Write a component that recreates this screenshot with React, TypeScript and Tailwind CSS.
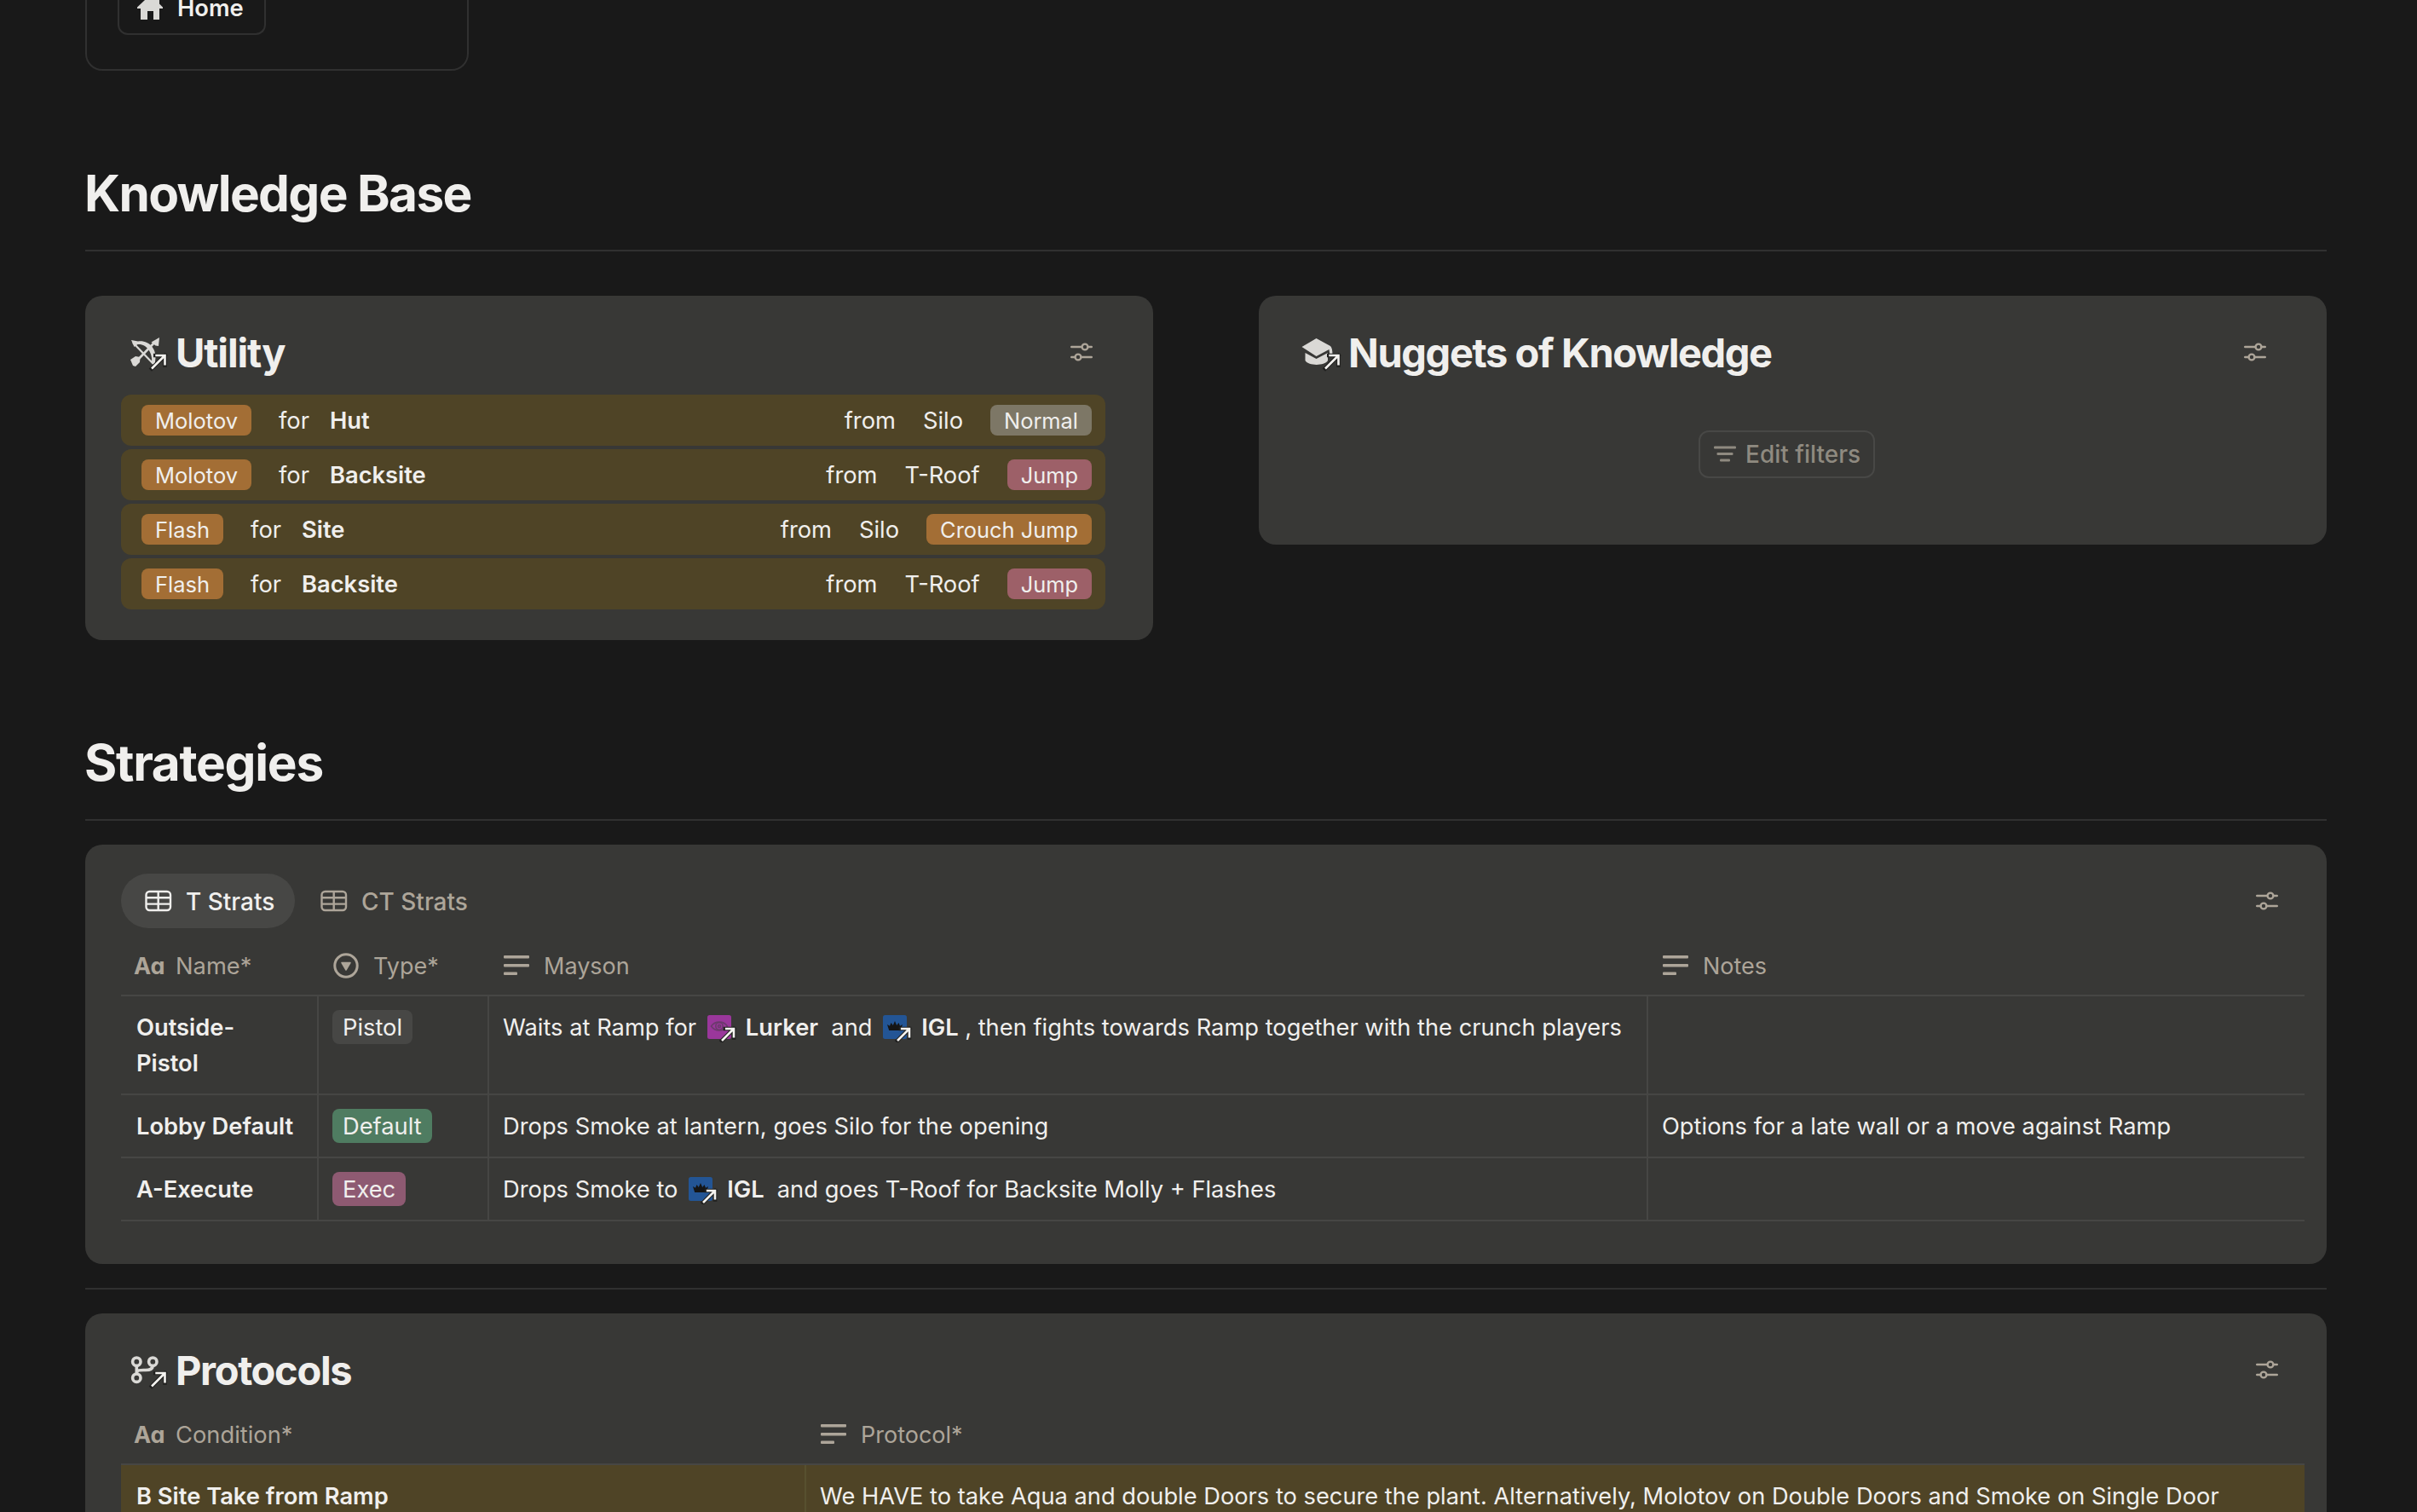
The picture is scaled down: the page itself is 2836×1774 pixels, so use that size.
import React from 'react';

interface UtilityRow {
  type: string;
  target: string;
  origin: string;
  throwType: string;
  throwColor: string;
}

interface StratRow {
  name: React.ReactNode;
  type: string;
  typeColor: string;
  mayson: React.ReactNode;
  notes: string;
  height: string;
}

// Small "linked page" arrow that sits on the corner of an icon
function LinkArrow({ x, y, size }: { x: number; y: number; size: number }) {
  const d = `M${x} ${y + size} L${x + size - 1} ${y + 1} M${x + size * 0.26} ${y + 1} H${x + size - 1} V${y + size * 0.76}`;
  return (
    <>
      <path d={d} stroke="#20201f" strokeWidth={4.6} fill="none" strokeLinecap="square" />
      <path d={d} stroke="#f4f3f0" strokeWidth={2.6} fill="none" />
    </>
  );
}

function BowIcon() {
  return (
    <svg className="overflow-visible" width="46" height="42" viewBox="0 0 46 42" fill="none">
      <path d="M1 7 L9 8.500 C22 7 30 17 29.500 28 L28.500 37 L25 34 C26.500 22 19 11 8.500 12 L4.500 15 Z" fill="#dad9d6" />
      <path d="M3 10 L27 35" stroke="#dad9d6" strokeWidth="2.200" />
      <path d="M6 33 L29 9" stroke="#dad9d6" strokeWidth="2.600" />
      <path d="M34 4 L33 14 L29.500 13.500 L24.500 9.500 Z" fill="#dad9d6" />
      <path d="M0 30 L6 26 L11.500 27 L11 33 L6 38 L3 37 Z" fill="#dad9d6" />
      <LinkArrow x={25} y={24} size={16.5} />
    </svg>
  );
}

function CapIcon() {
  return (
    <svg className="overflow-visible" width="46" height="42" viewBox="0 0 46 42" fill="none">
      <path d="M17.500 5 L34 14 Q36.500 16 36.500 25 H33.500 L32.500 18 L17.500 26 L0.500 15 Z" fill="#dad9d6" />
      <path d="M4.500 22 L17.500 29 L31 22 V31 C27 37.500 8.500 37.500 4.500 31 Z" fill="#dad9d6" />
      <LinkArrow x={28} y={24} size={16.5} />
    </svg>
  );
}

function BranchIcon() {
  return (
    <svg className="overflow-visible" width="46" height="42" viewBox="0 0 46 42" fill="none">
      <g stroke="#dad9d6" strokeWidth="3.6">
        <circle cx="7.300" cy="11.700" r="4.700" />
        <circle cx="26.300" cy="11.700" r="4.700" />
        <circle cx="7.300" cy="30.700" r="4.700" />
        <path d="M7.300 16.500 V26 M7.300 25 C8 21 11 21.500 18 21.500 C23 21.500 26 20 26.300 16.500" />
      </g>
      <LinkArrow x={25} y={24} size={16.5} />
    </svg>
  );
}

function SettingsIcon() {
  return (
    <svg width="26" height="24" viewBox="0 0 26 24" fill="none" stroke="#ada599" strokeWidth="2.4" strokeLinecap="round">
      <path d="M1.200 6 H13 M21 6 H24.800 M1.200 18 H5 M13 18 H24.800" />
      <circle cx="17" cy="6" r="3.400" />
      <circle cx="9" cy="18" r="3.400" />
    </svg>
  );
}

function TableIcon({ color }: { color: string }) {
  return (
    <svg width="32" height="26" viewBox="0 0 32 26" fill="none" stroke={color} strokeWidth="2.4">
      <rect x="1.500" y="2" width="28.500" height="22" rx="4" />
      <path d="M1.500 9.300 H30 M1.500 16.600 H30 M15.700 2 V24" />
    </svg>
  );
}

function LinesIcon() {
  return (
    <svg width="30" height="26" viewBox="0 0 30 26" fill="#ada599">
      <rect x="0" y="1" width="30" height="3.400" rx="1" />
      <rect x="0" y="11" width="30" height="3.400" rx="1" />
      <rect x="0" y="20.600" width="16" height="3.400" rx="1" />
    </svg>
  );
}

function SelectIcon() {
  return (
    <svg width="30" height="30" viewBox="0 0 30 30" fill="none">
      <circle cx="15" cy="15" r="13.200" stroke="#ada599" strokeWidth="3" />
      <path d="M10 11.500 H20 L15 20 Z" fill="#ada599" stroke="#ada599" strokeWidth="1.500" strokeLinejoin="round" />
    </svg>
  );
}

function Mention({ kind }: { kind: 'Lurker' | 'IGL' }) {
  return (
    <span className="ml-[5px] mr-[7.5px]">
      <svg className="inline-block align-[-8px]" width="36" height="32" viewBox="0 0 36 32" fill="none">
        <rect width="28" height="28" rx="2.500" fill={kind === 'Lurker' ? '#9a379b' : '#235595'} />
        {kind === 'Lurker' ? (
          <g stroke="#6c3a6d" strokeWidth="1.600">
            <path d="M4.500 13 C9 6.500 19 6.500 23.500 13 C19 19.500 9 19.500 4.500 13 Z" />
            <circle cx="14" cy="13" r="4.200" />
            <circle cx="14" cy="13" r="1.500" />
          </g>
        ) : (
          <path d="M5 11 L8 12.800 L9.500 9 L11.800 12 L14 7 L16.200 12 L18.500 9 L20 12.800 L23 11 L20.800 18 H7.200 Z" fill="#151515" />
        )}
        <LinkArrow x={17} y={15} size={15} />
      </svg>
      <span className="ml-[9px] font-semibold">{kind}</span>
    </span>
  );
}

const utility: UtilityRow[] = [
  { type: 'Molotov', target: 'Hut', origin: 'Silo', throwType: 'Normal', throwColor: 'bg-[#7d7766]' },
  { type: 'Molotov', target: 'Backsite', origin: 'T-Roof', throwType: 'Jump', throwColor: 'bg-[#9d6068]' },
  { type: 'Flash', target: 'Site', origin: 'Silo', throwType: 'Crouch Jump', throwColor: 'bg-[#a36e35]' },
  { type: 'Flash', target: 'Backsite', origin: 'T-Roof', throwType: 'Jump', throwColor: 'bg-[#9d6068]' },
];

const strats: StratRow[] = [
  {
    name: (
      <>
        Outside-
        <br />
        Pistol
      </>
    ),
    type: 'Pistol',
    typeColor: 'bg-[#474745]',
    mayson: (
      <>
        Waits at Ramp for <Mention kind="Lurker" /> and <Mention kind="IGL" />, then fights towards Ramp together with the crunch players
      </>
    ),
    notes: '',
    height: 'h-[116px]',
  },
  {
    name: 'Lobby Default',
    type: 'Default',
    typeColor: 'bg-[#4f7c61]',
    mayson: 'Drops Smoke at lantern, goes Silo for the opening',
    notes: 'Options for a late wall or a move against Ramp',
    height: 'h-[74px]',
  },
  {
    name: 'A-Execute',
    type: 'Exec',
    typeColor: 'bg-[#8e5a72]',
    mayson: (
      <>
        Drops Smoke to <Mention kind="IGL" /> and goes T-Roof for Backsite Molly + Flashes
      </>
    ),
    notes: '',
    height: 'h-[74px]',
  },
];

function UtilityItem({ row }: { row: UtilityRow }) {
  return (
    <div className="flex h-[60px] items-center rounded-[12px] bg-[#4f4426] pl-6 pr-4">
      <span className="flex h-9 items-center rounded-[8px] bg-[#a36e35] px-4 pt-0.5 text-[25.5px]">{row.type}</span>
      <span className="ml-8 pt-0.5">for</span>
      <span className="ml-6 pt-0.5 font-semibold">{row.target}</span>
      <span className="ml-auto pt-0.5">from</span>
      <span className="ml-8 pt-0.5">{row.origin}</span>
      <span className={`ml-8 flex h-9 items-center rounded-[8px] px-4 pt-0.5 text-[25.4px] ${row.throwColor}`}>{row.throwType}</span>
    </div>
  );
}

function Divider({ className }: { className: string }) {
  return <div className={`h-[2px] bg-[#303030] ${className}`} />;
}

function ColumnLabel({ icon, children }: { icon: React.ReactNode; children: React.ReactNode }) {
  return (
    <div className="flex items-center pl-[17px]">
      {icon}
      <span className="ml-[17px] pt-0.5 text-[27px]">{children}</span>
    </div>
  );
}

function AaLabel({ children }: { children: React.ReactNode }) {
  return (
    <div className="flex items-center pl-[15px] pt-0.5">
      <span className="w-[49px] text-[27px] font-bold [font-feature-settings:'cv11']">Aa</span>
      <span>{children}</span>
    </div>
  );
}

export default function App() {
  return (
    <div className="h-[1774px] w-[2836px] overflow-hidden bg-[#191919] font-['Inter',sans-serif] text-[27.3px] leading-[42px] text-[#f0efed]">
      <div className="ml-[100px] w-[2630px]">
        <div className="h-[83px] w-[450px] rounded-b-[20px] border-2 border-t-0 border-[#303030] pl-9">
          <div className="flex h-[41px] w-[174px] rounded-b-[12px] border-2 border-t-0 border-[#303030] pl-[21px]">
            <svg width="30" height="24" viewBox="0 0 30 24" fill="#dad9d6">
              <path d="M0 10 V8.500 L9 0 H26 V4.500 L30 8.500 V10 H26 V23 H19 V13 H12 V23 H4 V10 Z" />
            </svg>
            <span className="ml-[17px] font-semibold leading-5">Home</span>
          </div>
        </div>

        <h1 className="-ml-px mt-[108px] text-[58.5px] font-bold leading-[72px] tracking-[-1.65px]">Knowledge Base</h1>
        <Divider className="mt-[30px]" />

        <div className="mt-[52px] flex items-start justify-between">
          {/* Utility list */}
          <section className="w-[1253px] rounded-[20px] bg-[#383836] pb-9 pl-[42px] pr-14 pt-[34px]">
            <div className="flex h-16 items-center pl-[11px] pr-[15px]">
              <BowIcon />
              <h2 className="ml-[7px] pt-0.5 text-[47px] font-bold tracking-[-1.15px]">Utility</h2>
              <div className="ml-auto">
                <SettingsIcon />
              </div>
            </div>
            <div className="mt-[18px] flex flex-col gap-1">
              {utility.map((row, i) => (
                <UtilityItem key={i} row={row} />
              ))}
            </div>
          </section>

          {/* Nuggets */}
          <section className="w-[1253px] rounded-[20px] bg-[#383836] pb-[78px] pl-[42px] pr-14 pt-[34px]">
            <div className="flex h-16 items-center pl-[8px] pr-[15px]">
              <CapIcon />
              <h2 className="ml-[9px] pt-0.5 text-[47px] font-bold tracking-[-1.4px]">Nuggets of Knowledge</h2>
              <div className="ml-auto">
                <SettingsIcon />
              </div>
            </div>
            <div className="mx-auto mt-[60px] flex h-14 w-[207px] items-center rounded-[12px] border-2 border-[#484846] pl-4 text-[#8f8a80]">
              <svg width="26" height="20" viewBox="0 0 26 20" fill="#8f8a80">
                <rect x="0" y="0.500" width="26" height="3" rx="1" />
                <rect x="3.500" y="8" width="19" height="3" rx="1" />
                <rect x="7" y="15.500" width="12" height="3" rx="1" />
              </svg>
              <span className="ml-[11px] whitespace-nowrap text-[28px] font-medium">Edit filters</span>
            </div>
          </section>
        </div>

        <h1 className="-ml-px mt-[108px] text-[58.5px] font-bold leading-[72px] tracking-[-1.3px]">Strategies</h1>
        <Divider className="mt-[30px]" />

        {/* Strats table */}
        <section className="mt-7 rounded-[20px] bg-[#383836] pb-[50px] pl-[42px] pr-[26px] pt-[34px]">
          <div className="flex h-16 items-center pr-[31px] text-[28px] font-medium">
            <div className="flex h-16 w-[204px] items-center rounded-full bg-[#474745] pl-[28px]">
              <TableIcon color="#f0efed" />
              <span className="ml-4 pt-0.5">T Strats</span>
            </div>
            <div className="ml-[30px] flex items-center text-[#ada599]">
              <TableIcon color="#ada599" />
              <span className="ml-4 pt-0.5">CT Strats</span>
            </div>
            <div className="ml-auto">
              <SettingsIcon />
            </div>
          </div>

          <div className="mt-[10px] grid h-[70px] grid-cols-[232px_200px_1360px_770px] border-b-2 border-[#464644] text-[#ada599]">
            <AaLabel>Name*</AaLabel>
            <ColumnLabel icon={<SelectIcon />}>Type*</ColumnLabel>
            <ColumnLabel icon={<LinesIcon />}>Mayson</ColumnLabel>
            <ColumnLabel icon={<LinesIcon />}>Notes</ColumnLabel>
          </div>

          {strats.map((row, i) => (
            <div key={i} className={`grid grid-cols-[232px_200px_1360px_770px] border-b-2 border-[#464644] ${row.height}`}>
              <div className="whitespace-nowrap border-r-2 border-[#464644] pl-[18px] pt-4 font-semibold">{row.name}</div>
              <div className="flex items-start border-r-2 border-[#464644] pl-4 pt-4">
                <span className={`flex h-10 items-center rounded-[8px] px-3 pt-0.5 ${row.typeColor}`}>{row.type}</span>
              </div>
              <div className="whitespace-nowrap border-r-2 border-[#464644] pl-4 pt-4">{row.mayson}</div>
              <div className="pl-4 pt-4">{row.notes}</div>
            </div>
          ))}
        </section>

        <Divider className="mt-7" />

        {/* Protocols table */}
        <section className="mt-7 h-[400px] rounded-[20px] bg-[#383836] pl-[42px] pr-[26px] pt-[34px]">
          <div className="flex h-16 items-center pl-[11px] pr-[31px]">
            <BranchIcon />
            <h2 className="ml-[7px] pt-0.5 text-[47px] font-bold tracking-[-1.35px]">Protocols</h2>
            <div className="ml-auto">
              <SettingsIcon />
            </div>
          </div>
          <div className="mt-[10px] grid h-[70px] grid-cols-[804px_1758px] border-b-2 border-[#464644] text-[#ada599]">
            <AaLabel>Condition*</AaLabel>
            <ColumnLabel icon={<LinesIcon />}>Protocol*</ColumnLabel>
          </div>
          <div className="grid h-[74px] grid-cols-[804px_1758px] bg-[#4f4426]">
            <div className="border-r-2 border-[#57502f] pl-[18px] pt-4 font-semibold">B Site Take from Ramp</div>
            <div className="whitespace-nowrap pl-4 pt-4 text-[27.25px]">
              We HAVE to take Aqua and double Doors to secure the plant. Alternatively, Molotov on Double Doors and Smoke on Single Door
            </div>
          </div>
        </section>
      </div>
    </div>
  );
}
